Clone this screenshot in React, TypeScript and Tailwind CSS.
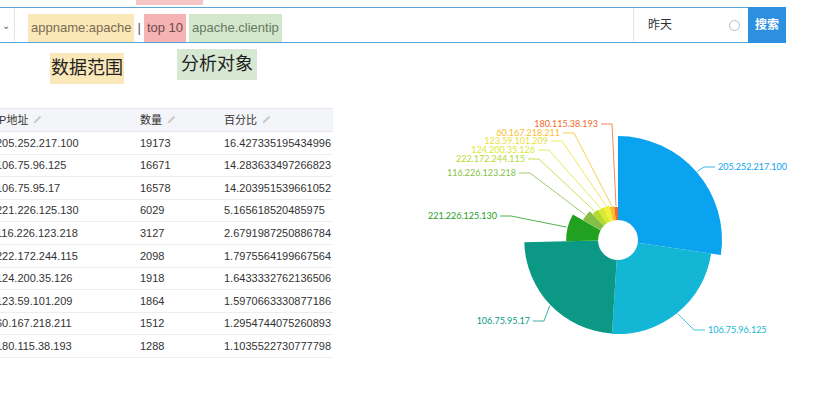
import React from 'react';

const rows = [
  ['205.252.217.100', 19173, '16.427335195434996', '#0aa3ef'],
  ['106.75.96.125', 16671, '14.283633497266823', '#14b6d6'],
  ['106.75.95.17', 16578, '14.203951539661052', '#0b9985'],
  ['221.226.125.130', 6029, '5.165618520485975', '#22a020'],
  ['116.226.123.218', 3127, '2.6791987250886784', '#86bf45'],
  ['222.172.244.115', 2098, '1.7975564199667564', '#b3dc2f'],
  ['124.200.35.126', 1918, '1.6433332762136506', '#d8ea2c'],
  ['123.59.101.209', 1864, '1.5970663330877186', '#f4ee3a'],
  ['60.167.218.211', 1512, '1.2954744075260893', '#f5c02a'],
  ['180.115.38.193', 1288, '1.1035522730777798', '#f26a2a'],
] as const;

// label anchor [x, y, side]
const labels: [number, number, 'l' | 'r'][] = [
  [298, 67, 'r'],
  [288, 230, 'r'],
  [110, 221, 'l'],
  [77, 116, 'l'],
  [96, 73, 'l'],
  [105, 59, 'l'],
  [115, 50, 'l'],
  [128, 41, 'l'],
  [140, 33, 'l'],
  [178, 24, 'l'],
];

const Pencil = () => (
  <svg width="11" height="11" viewBox="0 0 12 12" className="inline ml-1 -mt-0.5">
    <path d="M2 10 L2.5 8 L8.5 2 L10 3.5 L4 9.5 Z" fill="#c9c9c9" />
  </svg>
);

function Chart() {
  const cx = 198, cy = 140, hole = 20;
  const total = rows.reduce((s, r) => s + r[1], 0);
  let a = -Math.PI / 2;
  const pt = (ang: number, r: number) => [cx + r * Math.cos(ang), cy + r * Math.sin(ang)];
  return (
    <svg width="400" height="260" viewBox="0 0 400 260" style={{ fontFamily: 'Lato, "DejaVu Sans", sans-serif' }}>
      {rows.map((row, i) => {
        const sweep = (row[1] / total) * Math.PI * 2;
        const a0 = a, a1 = a + sweep;
        a = a1;
        const r = 28 + 76 * (row[1] / 19173);
        const [x0, y0] = pt(a0, r), [x1, y1] = pt(a1, r);
        const [h0x, h0y] = pt(a0, hole), [h1x, h1y] = pt(a1, hole);
        const large = sweep > Math.PI ? 1 : 0;
        const d = `M${h0x},${h0y} L${x0},${y0} A${r},${r} 0 ${large} 1 ${x1},${y1} L${h1x},${h1y} A${hole},${hole} 0 ${large} 0 ${h0x},${h0y} Z`;
        const mid = (a0 + a1) / 2;
        const [ex, ey] = pt(mid, r + 1);
        const [lx, ly, side] = labels[i];
        const elbow = side === 'r' ? lx - 14 : lx + 14;
        const col = row[3] === '#f4ee3a' ? '#e8e23a' : row[3];
        return (
          <g key={row[0]}>
            <path d={d} fill={row[3]} />
            <polyline points={`${ex},${ey} ${elbow},${ly} ${side === 'r' ? lx - 3 : lx + 3},${ly}`} fill="none" stroke={col} strokeWidth="0.8" />
            <text x={lx} y={ly + 3} fontSize="9" fill={col} textAnchor={side === 'r' ? 'start' : 'end'}>{row[0]}</text>
          </g>
        );
      })}
    </svg>
  );
}

export default function App() {
  return (
    <div className="w-[831px] h-[401px] bg-white relative overflow-hidden" style={{ fontFamily: '"Liberation Sans", "Noto Sans CJK SC", sans-serif' }}>
      <div className="absolute left-[136px] top-0 w-[67px] h-[5px] bg-[#f6c6c6]" />
      <div className="pt-[7px]">
        <div className="flex w-[786px] h-[36px] border-y border-[#5aa6d8] text-[13px]">
          <div className="w-[15px] flex items-center border-r border-[#e3e3e3] text-[#666] text-[10px] pl-0.5">⌄</div>
          <div className="flex-1 flex items-stretch pl-[13px] pt-[6px]">
            <span className="bg-[#fbe8b8] text-[#7a6a50] px-[3px] flex items-center">appname:apache</span>
            <span className="text-[#555] px-[3px] flex items-center">|</span>
            <span className="bg-[#f6b3b3] text-[#6b4a4a] px-[3px] flex items-center">top 10</span>
            <span className="bg-[#d3e7cd] text-[#667a62] px-[3px] ml-[3px] flex items-center">apache.clientip</span>
          </div>
          <div className="w-[115px] border-l border-[#e3e3e3] flex items-center justify-between pl-[14px] pr-[8px] text-[#333] text-[12px]">
            <span>昨天</span>
            <span className="w-[11px] h-[11px] rounded-full border border-[#bbb]" />
          </div>
          <div className="w-[38px] -my-px bg-[#2d8fe0] text-white text-[12px] font-bold flex items-center justify-center">搜索</div>
        </div>
      </div>
      <div className="relative h-[57px] text-[18px] text-[#222]">
        <span className="absolute left-[50px] top-[10px] bg-[#fbe8b8] px-[1px] h-[31px] leading-[31px]">数据范围</span>
        <span className="absolute left-[177px] top-[6px] bg-[#d7e8d2] px-[4px] h-[31px] leading-[31px]">分析对象</span>
      </div>
      <div className="flex">
        <div className="w-[337px] mt-[8px] text-[11px] text-[#333] -ml-[4px]">
          <div className="flex h-[24px] items-center bg-[#f3f5f8] border-y border-[#e5e8ec]">
            <div className="w-[144px]">IP地址<Pencil /></div>
            <div className="w-[84px]">数量<Pencil /></div>
            <div>百分比<Pencil /></div>
          </div>
          {rows.map(r => (
            <div key={r[0]} className="flex h-[22.6px] items-center border-b border-[#eceef0]">
              <div className="w-[144px]">{r[0]}</div>
              <div className="w-[84px]">{r[1]}</div>
              <div>{r[2]}</div>
            </div>
          ))}
        </div>
        <div className="ml-[87px]">
          <Chart />
        </div>
      </div>
    </div>
  );
}
